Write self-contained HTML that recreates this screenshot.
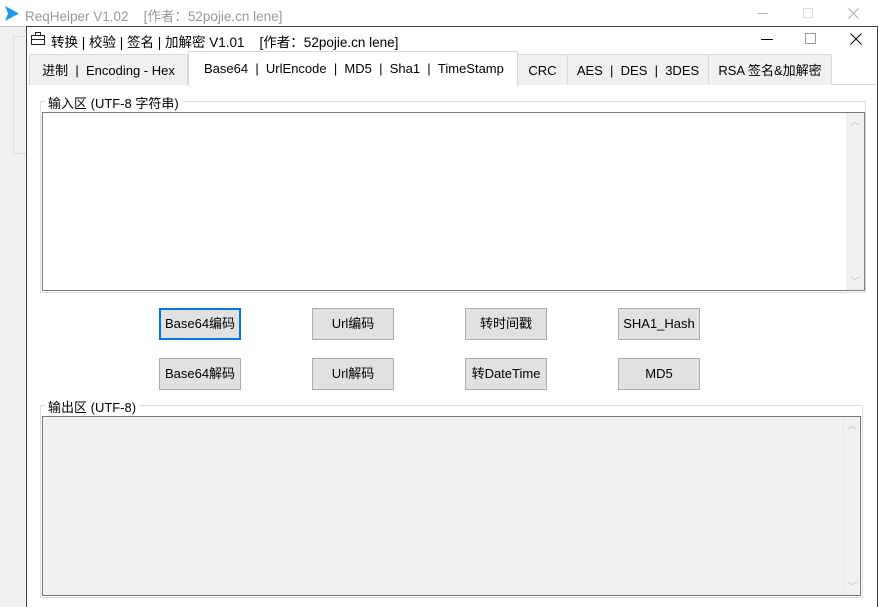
<!DOCTYPE html>
<html><head><meta charset="utf-8"><style>
*{margin:0;padding:0;box-sizing:border-box}
body{width:878px;height:607px;overflow:hidden;background:#f0f0f0;font-family:"Liberation Sans","Noto Sans CJK SC",sans-serif;font-size:13px;color:#000;position:relative}
.a{position:absolute}
.btn{position:absolute;width:82px;height:32px;background:#e1e1e1;border:1px solid #adadad;text-align:center;line-height:30px;font-size:13px}
.tab{position:absolute;top:54px;height:31px;background:#f0f0f0;border:1px solid #d9d9d9;border-bottom:none;line-height:31px;text-align:center;font-size:13px}
.sb{position:absolute;background:#f0f0f0;color:#bbb;font-size:10px;text-align:center}
</style></head><body>
<div class="a" style="left:0;top:0;width:878px;height:27px;background:#fff;border-bottom:1px solid #ccc"></div>
<svg class="a" style="left:5px;top:6px" width="14" height="15"><polygon points="0,0 14,7.5 0,15 3,7.5" fill="#1e9be9"/></svg>
<div class="a" style="left:25px;top:5px;color:#999;font-size:13.5px">ReqHelper V1.02 &nbsp;&nbsp; [作者：52pojie.cn lene]</div>
<div class="a" style="left:757px;top:13px;width:11px;height:1px;background:#bbb"></div>
<div class="a" style="left:803px;top:8px;width:10px;height:10px;border:1px solid #ddd"></div>
<svg class="a" style="left:848px;top:8px" width="11" height="11"><path d="M0.5 0.5L10.5 10.5M10.5 0.5L0.5 10.5" stroke="#aaa"/></svg>
<div class="a" style="left:13px;top:36px;width:14px;height:118px;border:1px solid #ddd;border-right:none"></div>
<div class="a" style="left:26px;top:26px;width:852px;height:581px;background:#fff;border:1px solid #444;border-bottom:none"></div>
<svg class="a" style="left:31px;top:32px" width="15" height="14"><rect x="0.5" y="3.5" width="13" height="9" fill="none" stroke="#222"/><rect x="4.5" y="0.5" width="5" height="3" fill="none" stroke="#222"/><line x1="0.5" y1="7.5" x2="13.5" y2="7.5" stroke="#222"/></svg>
<div class="a" style="left:51px;top:31px;font-size:13.5px">转换 | 校验 | 签名 | 加解密 V1.01 &nbsp;&nbsp; [作者：52pojie.cn lene]</div>
<div class="a" style="left:761px;top:39px;width:12px;height:1px;background:#000"></div>
<div class="a" style="left:805px;top:33px;width:11px;height:11px;border:1px solid #999"></div>
<svg class="a" style="left:850px;top:33px" width="12" height="12"><path d="M0.5 0.5L11.5 11.5M11.5 0.5L0.5 11.5" stroke="#000"/></svg>
<div class="a" style="left:28px;top:84px;width:848px;height:1px;background:#d9d9d9"></div>
<div class="tab" style="left:29px;width:159px">进制 &nbsp;| &nbsp;Encoding - Hex</div>
<div class="tab" style="left:188px;top:51px;width:330px;height:35px;background:#fff;line-height:33px;text-align:left;padding-left:15px">Base64 &nbsp;| &nbsp;UrlEncode &nbsp;| &nbsp;MD5 &nbsp;| &nbsp;Sha1 &nbsp;| &nbsp;TimeStamp</div>
<div class="tab" style="left:517px;width:51px">CRC</div>
<div class="tab" style="left:567px;width:142px">AES &nbsp;| &nbsp;DES &nbsp;| &nbsp;3DES</div>
<div class="tab" style="left:708px;width:124px">RSA 签名&amp;加解密</div>
<div class="a" style="left:40px;top:101px;width:826px;height:192px;border:1px solid #dcdcdc"></div>
<div class="a" style="left:45px;top:93px;background:#fff;padding:0 3px">输入区 (UTF-8 字符串)</div>
<div class="a" style="left:42px;top:112px;width:823px;height:179px;border:1px solid #7a7a7a;background:#fff"></div>
<div class="sb" style="left:846px;top:113px;width:18px;height:177px">︿<div style="position:absolute;bottom:2px;width:18px">﹀</div></div>
<div class="btn" style="left:159px;top:308px;border:2px solid #0078d7;line-height:28px">Base64编码</div>
<div class="btn" style="left:312px;top:308px">Url编码</div>
<div class="btn" style="left:465px;top:308px">转时间戳</div>
<div class="btn" style="left:618px;top:308px">SHA1_Hash</div>
<div class="btn" style="left:159px;top:358px">Base64解码</div>
<div class="btn" style="left:312px;top:358px">Url解码</div>
<div class="btn" style="left:465px;top:358px">转DateTime</div>
<div class="btn" style="left:618px;top:358px">MD5</div>
<div class="a" style="left:40px;top:405px;width:823px;height:193px;border:1px solid #dcdcdc"></div>
<div class="a" style="left:45px;top:397px;background:#fff;padding:0 3px">输出区 (UTF-8)</div>
<div class="a" style="left:42px;top:416px;width:819px;height:180px;border:1px solid #7a7a7a;background:#f0f0f0"></div>
<div class="sb" style="left:843px;top:417px;width:17px;height:178px;border-left:1px solid #e6e6e6">︿<div style="position:absolute;bottom:2px;width:17px">﹀</div></div>
</body></html>
